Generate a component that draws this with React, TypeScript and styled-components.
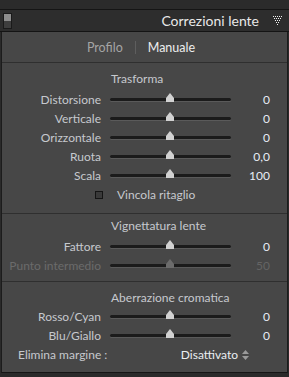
import React from "react";
import styled, { createGlobalStyle } from "styled-components";

const GlobalStyle = createGlobalStyle`
    html, body {
        margin: 0;
        padding: 0;
        background: #2a2a2a;
    }
    body {
        font-family: Lato, "Liberation Sans", Arial, sans-serif;
    }
`;

const Frame = styled.div`
    width: 289px;
    height: 377px;
    overflow: hidden;
    background: #2a2a2a;
    display: flex;
    flex-direction: column;
`;

const TopStrip = styled.div`
    height: 9px;
    background: #2b2b2b;
    border-bottom: 1px solid #151515;
`;

const Header = styled.div`
    height: 21px;
    display: flex;
    align-items: center;
    padding: 0 6px 0 3px;
    background: #2d2d2d;
    border-bottom: 1px solid #141414;
`;

const Switch = styled.div`
    width: 7px;
    height: 14px;
    border: 1px solid #1a1a1a;
    background: linear-gradient(#8c8c8c 0, #8c8c8c 50%, #3e3e3e 50%, #3e3e3e 100%);
`;

const HeaderTitle = styled.div`
    flex: 1;
    text-align: right;
    color: #e8e8e8;
    font-size: 14px;
    padding-right: 13px;
`;

const Panel = styled.div`
    margin: 0 1px;
    background: #474747;
    border-left: 1px solid #1c1c1c;
    border-right: 1px solid #1c1c1c;
    border-bottom: 1px solid #151515;
`;

const Tabs = styled.div`
    height: 30px;
    display: flex;
    align-items: center;
    justify-content: center;
    font-size: 12.5px;
    padding-right: 7px;
`;

const Tab = styled.span<{ $active?: boolean }>`
    color: ${(p) => (p.$active ? "#ededed" : "#a5a5a5")};
`;

const TabSep = styled.span`
    width: 1px;
    height: 13px;
    background: #5e5e5e;
    margin: 0 12px;
`;

const Section = styled.div<{ $top: number; $bottom: number; $gap: number }>`
    border-top: 1px solid #2f2f2f;
    padding: ${(p) => p.$top}px 0 ${(p) => p.$bottom}px;

    h2 {
        margin: 0 0 ${(p) => p.$gap}px;
        height: 16px;
        line-height: 16px;
        font-weight: normal;
        font-size: 12px;
        color: #c6c9ce;
        padding-left: 109px;
    }
`;

const Row = styled.div<{ $dim?: boolean }>`
    height: 19px;
    display: flex;
    align-items: center;
    font-size: 12px;
    color: ${(p) => (p.$dim ? "#6b6b6b" : "#c6c9ce")};
`;

const Label = styled.div`
    width: 99px;
    text-align: right;
    white-space: nowrap;
`;

const Track = styled.div`
    position: relative;
    margin-left: 9px;
    width: 121px;
    height: 3px;
    border-radius: 2px;
    background: #1b1b1b;
    box-shadow: 0 1px 0 #5a5a5a;
`;

const Thumb = styled.svg<{ $dim?: boolean }>`
    position: absolute;
    left: 55px;
    top: -5px;
    width: 10px;
    height: 9px;
    fill: ${(p) => (p.$dim ? "#6c6c6c" : "#d2d2d2")};
`;

const Value = styled.div<{ $dim?: boolean }>`
    width: 39px;
    text-align: right;
    color: ${(p) => (p.$dim ? "#646464" : "#e6edf5")};
`;

const CheckRow = styled.div`
    height: 19px;
    display: flex;
    align-items: center;
    padding-left: 93px;
    font-size: 12px;
    color: #c6c9ce;
`;

const Box = styled.span`
    width: 6px;
    height: 6px;
    border: 1px solid #151515;
    background: #3a3a3a;
    margin-right: 14px;
`;

const SelectRow = styled.div`
    height: 19px;
    display: flex;
    align-items: center;
    font-size: 12px;
    color: #c6c9ce;
    padding-left: 16px;
`;

const SelectValue = styled.div`
    margin-left: auto;
    margin-right: 38px;
    color: #eaeef2;
    display: flex;
    align-items: center;
    gap: 4px;
`;

interface SliderProps {
    label: string;
    value: string;
    dim?: boolean;
}

const Slider = ({ label, value, dim }: SliderProps) => (
    <Row $dim={dim}>
        <Label>{label}</Label>
        <Track>
            <Thumb $dim={dim} viewBox="0 0 10 9">
                <path d="M5 0 L9 5 L9 9 L1 9 L1 5 Z" />
            </Thumb>
        </Track>
        <Value $dim={dim}>{value}</Value>
    </Row>
);

const Disclosure = () => (
    <svg width="11" height="9" viewBox="0 0 11 9" fill="#f0f0f0">
        {[0, 2, 4, 6, 8].map((x) => (
            <rect key={"a" + x} x={x + 1} y={0} width={1} height={1} />
        ))}
        {[0, 2, 4, 6].map((x) => (
            <rect key={"b" + x} x={x + 2} y={2} width={1} height={1} />
        ))}
        {[0, 2, 4].map((x) => (
            <rect key={"c" + x} x={x + 3} y={4} width={1} height={1} />
        ))}
        {[0, 2].map((x) => (
            <rect key={"d" + x} x={x + 4} y={6} width={1} height={1} />
        ))}
        <rect x={5} y={8} width={1} height={1} />
    </svg>
);

const UpDown = () => (
    <svg width="7" height="10" viewBox="0 0 7 10" fill="#9a9a9a">
        <path d="M3.5 0 L7 4 L0 4 Z M0 6 L7 6 L3.5 10 Z" />
    </svg>
);

const App = () => (
    <>
        <GlobalStyle />
        <Frame>
            <TopStrip />
            <Header>
                <Switch />
                <HeaderTitle>Correzioni lente</HeaderTitle>
                <Disclosure />
            </Header>
            <Panel>
                <Tabs>
                    <Tab>Profilo</Tab>
                    <TabSep />
                    <Tab $active>Manuale</Tab>
                </Tabs>
                <Section $top={8} $bottom={9} $gap={3}>
                    <h2>Trasforma</h2>
                    <Slider label="Distorsione" value="0" />
                    <Slider label="Verticale" value="0" />
                    <Slider label="Orizzontale" value="0" />
                    <Slider label="Ruota" value="0,0" />
                    <Slider label="Scala" value="100" />
                    <CheckRow>
                        <Box />
                        Vincola ritaglio
                    </CheckRow>
                </Section>
                <Section $top={4} $bottom={6} $gap={3}>
                    <h2>Vignettatura lente</h2>
                    <Slider label="Fattore" value="0" />
                    <Slider label="Punto intermedio" value="50" dim />
                </Section>
                <Section $top={8} $bottom={8} $gap={1}>
                    <h2>Aberrazione cromatica</h2>
                    <Slider label="Rosso/Cyan" value="0" />
                    <Slider label="Blu/Giallo" value="0" />
                    <SelectRow>
                        Elimina margine :
                        <SelectValue>
                            Disattivato <UpDown />
                        </SelectValue>
                    </SelectRow>
                </Section>
            </Panel>
        </Frame>
    </>
);

export default App;
